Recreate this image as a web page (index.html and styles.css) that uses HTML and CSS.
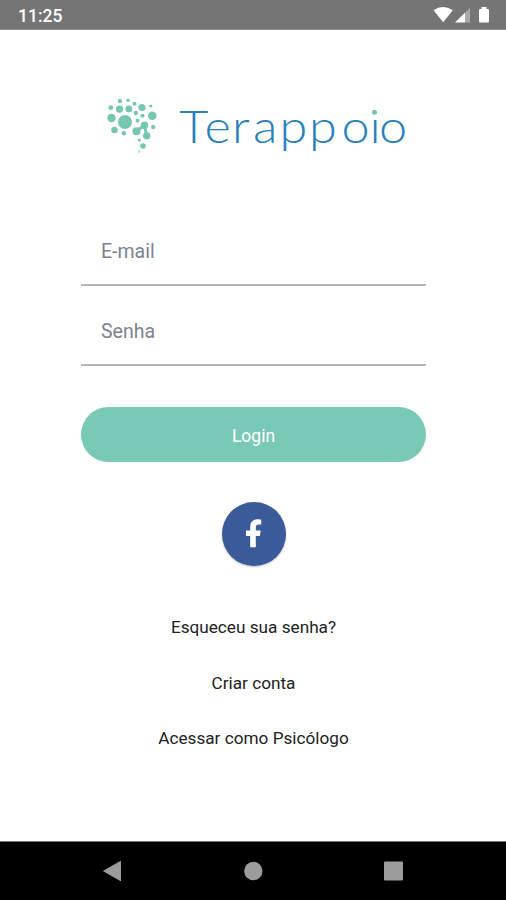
FILE: index.html
```html
<!DOCTYPE html>
<html lang="pt-BR">
  <head>
    <title>Terappoio</title>
    <meta charset="utf-8">
    <link rel="stylesheet" href="styles.css">
  </head>
  <body>

  <div class="status-bar">
    <span class="clock">11:25</span>
    <svg class="status-icons" width="60" height="20" viewBox="0 0 60 20">
      <path fill="#fff" d="M3.5 5.2 Q13 -1 22.8 5.2 L13.2 17.2 Z"/>
      <path fill="#fff" d="M25 17.5 L35 7.8 V17.5 Z"/>
      <path fill="#a9a9a9" d="M35 7.8 L40 3 V17.5 H35 Z"/>
      <path fill="#fff" d="M51.5 2 h5 v2 h1.5 q1 0 1 1 V16.5 q0 1 -1 1 h-8 q-1 0 -1 -1 V5 q0 -1 1 -1 h1.5 Z"/>
    </svg>
  </div>

  <main class="login">
    <svg class="logo" width="320" height="70" viewBox="0 0 320 70">
      <g fill="#75c7b4">
        <circle cx="20" cy="11" r="2.2"/>
        <circle cx="28" cy="10.3" r="1.7"/>
        <circle cx="34.5" cy="13.7" r="2"/>
        <circle cx="10.8" cy="17.7" r="2.4"/>
        <circle cx="19.5" cy="19.2" r="3.6"/>
        <circle cx="28.8" cy="19" r="3.4"/>
        <circle cx="42" cy="17.5" r="3.6"/>
        <circle cx="50.7" cy="16" r="1.6"/>
        <circle cx="35.8" cy="23" r="2.2"/>
        <circle cx="42.5" cy="25.8" r="2"/>
        <circle cx="52.3" cy="25.7" r="4.3"/>
        <circle cx="11.5" cy="28" r="4.2"/>
        <circle cx="25" cy="32" r="7"/>
        <circle cx="37.5" cy="30.5" r="2"/>
        <circle cx="53.2" cy="37" r="2.2"/>
        <circle cx="14.5" cy="40" r="3.3"/>
        <circle cx="23.8" cy="43.3" r="2.2"/>
        <circle cx="36.5" cy="41.2" r="4"/>
        <circle cx="44.5" cy="35.2" r="3.7"/>
        <circle cx="46.7" cy="45.7" r="3.7"/>
        <circle cx="39.3" cy="50" r="1.6"/>
        <circle cx="43" cy="56" r="2.8"/>
        <circle cx="39" cy="61.5" r="1.5" opacity=".4"/>
      </g>
      <path d="M36.5 41 L44.5 35.2 L46.7 45.5" fill="none" stroke="#75c7b4" stroke-width="3"/>
      <text class="wordmark" transform="scale(1.12 1)" y="52.7" x="70.8 93.3 117.9 136.6 160.3 186.6 215.6 240.6 249.1">Terappoio</text>
      <!-- green dot over the i -->
      <rect x="269" y="16" width="11" height="11" fill="#fff"/>
      <circle cx="274.5" cy="22.2" r="2.5" fill="#75c7b4"/>
    </svg>

    <div class="field">E-mail</div>
    <div class="field">Senha</div>

    <div class="login-button">Login</div>

    <div class="facebook">
      <svg width="64" height="64" viewBox="0 0 64 64">
        <path fill="#fff" d="M28.2 45.2 V34 H24 V28.5 H28.2 V25 C28.2 20 31 17.3 35.3 17.3 C37.1 17.3 38.5 17.5 39.2 17.7 V22.4 H36.9 C34.5 22.4 33.8 23.5 33.8 25.4 V28.5 H38.7 L37.9 34 H33.8 V45.2 Z"/>
      </svg>
    </div>

    <div class="links">
      <span class="link">Esqueceu sua senha?</span>
      <span class="link">Criar conta</span>
      <span class="link">Acessar como Psicólogo</span>
    </div>
  </main>

  <div class="nav-bar">
    <svg width="20" height="22" viewBox="0 0 20 22"><path d="M.8 11 L18.2 1 Q19 .7 19 1.6 V20.4 Q19 21.3 18.2 21 Z"/></svg>
    <svg width="20" height="22" viewBox="0 0 20 22"><circle cx="10.3" cy="11" r="9.2"/></svg>
    <svg width="20" height="22" viewBox="0 0 20 22"><rect x="0" y="1.5" width="19" height="19" rx="1"/></svg>
  </div>

  </body>
</html>
```
FILE: styles.css
```css
body {
  margin: 0;
  height: 900px;
  display: flex;
  flex-direction: column;
  background: #fff;
  font-family: Roboto, sans-serif;
  overflow: hidden;
}

.status-bar {
  box-sizing: border-box;
  height: 30px;
  padding: 5px 15px 0 18px;
  display: flex;
  justify-content: space-between;
  background: #757575;
  border-bottom: 1px solid #8e8e8e;
}

.clock {
  color: #fff;
  font-size: 17.5px;
  font-weight: 500;
  line-height: 22px;
}

.status-icons {
  margin-right: 1px;
}

.login {
  flex: 1;
  padding-left: 1px;
  display: flex;
  flex-direction: column;
  align-items: center;
}

.logo {
  margin: 60px 0 57px 13px;
}

.wordmark {
  font-family: Lato, sans-serif;
  font-size: 45px;
  font-weight: 300;
  fill: #2680bb;
}

.field {
  box-sizing: border-box;
  width: 345px;
  height: 69px;
  margin-bottom: 11px;
  padding-left: 20px;
  border-bottom: 2px solid #b3b7bc;
  color: #7b838e;
  font-size: 19.5px;
  line-height: 70px;
}

.login-button {
  width: 345px;
  height: 55px;
  margin-top: 30px;
  border-radius: 28px;
  background: #79c9b7;
  color: #fff;
  font-size: 17.5px;
  line-height: 58px;
  text-align: center;
}

.facebook {
  width: 64px;
  height: 64px;
  margin-top: 40px;
  border-radius: 50%;
  background: #3b5a9a;
  box-shadow: 0 1px 2px rgba(0, 0, 0, 0.25);
}

.links {
  margin-top: 34px;
  display: flex;
  flex-direction: column;
  align-items: center;
}

.link {
  color: #222;
  font-size: 17.2px;
  line-height: 55.5px;
}

.nav-bar {
  box-sizing: border-box;
  height: 59px;
  padding: 0 102px;
  display: flex;
  justify-content: space-between;
  align-items: center;
  background: #000;
  border-top: 1px solid #777;
  fill: #9c9c9c;
}
```
